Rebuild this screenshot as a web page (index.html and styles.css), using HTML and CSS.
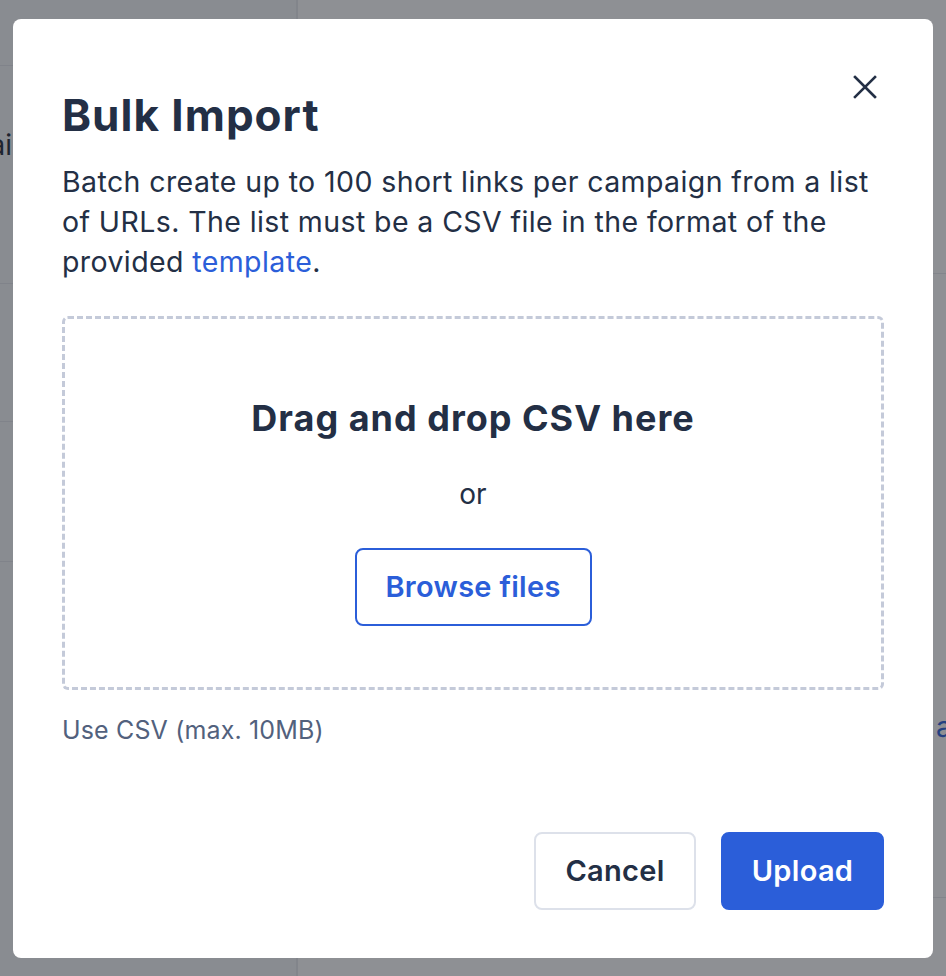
FILE: index.html
```html
<!DOCTYPE html>
<html lang="en">
<head>
<meta charset="utf-8">
<title>Bulk Import</title>
<link rel="stylesheet" href="styles.css">
</head>
<body>
<div class="page">
  <aside class="side">
    <div class="side-row r1"></div>
    <div class="side-row r2"><span class="ghost">Campai</span></div>
    <div class="side-row r3"></div>
    <div class="side-row r4"></div>
    <div class="side-row r5"></div>
  </aside>
  <main class="main">
    <div class="main-row m1"></div>
    <div class="main-row m2"><span class="ghost-link">a</span></div>
    <div class="main-row m3"></div>
  </main>
</div>

<div class="overlay">
  <div class="modal" role="dialog" aria-labelledby="title">
    <div class="modal-head">
      <h1 id="title" class="title">Bulk Import</h1>
      <button class="close" aria-label="Close">
        <svg width="24" height="24" viewBox="0 0 24 24" fill="none" stroke="currentColor" stroke-width="2.6" stroke-linecap="square">
          <path d="M2 2L22 22M22 2L2 22"/>
        </svg>
      </button>
    </div>
    <p class="desc">Batch create up to 100 short links per campaign from a list of URLs. The list must be a CSV file in the format of the provided <a href="#" class="link">template</a>.</p>
    <div class="drop">
      <div class="drop-title">Drag and drop CSV here</div>
      <div class="drop-or">or</div>
      <button class="btn btn-outline">Browse files</button>
    </div>
    <div class="hint">Use CSV (max. 10MB)</div>
    <div class="actions">
      <button class="btn btn-secondary">Cancel</button>
      <button class="btn btn-primary">Upload</button>
    </div>
  </div>
</div>
</body>
</html>
```

FILE: styles.css
```css
* { box-sizing: border-box; }
html, body { margin: 0; padding: 0; }
body {
  font-family: "Inter", "Lato", sans-serif;
  color: #232f45;
  background: #ffffff;
  width: 946px;
  height: 976px;
  overflow: hidden;
}

.page {
  display: flex;
  height: 976px;
}
.side {
  width: 298px;
  flex: none;
  background: #f5f6f8;
  border-right: 2px solid #e6e8ec;
  display: flex;
  flex-direction: column;
}
.side-row { border-bottom: 1px solid #e3e5ea; flex: none; }
.r1 { height: 66px; }
.r2 { height: 218px; padding-top: 62px; }
.r3 { height: 138px; }
.r4 { height: 140px; }
.r5 { flex: 1; border-bottom: 0; }
.ghost {
  display: block;
  text-align: right;
  font-size: 28px;
  color: #1f2635;
  padding-right: 284px;
  white-space: nowrap;
  margin-left: -100px;
}
.main { flex: 1; background: #ffffff; display: flex; flex-direction: column; }
.main-row { border-bottom: 1px solid #e6e8ec; flex: none; }
.m1 { height: 274px; }
.m2 { height: 624px; padding-top: 436px; padding-left: 638px; }
.m3 { flex: 1; border-bottom: 0; }
.ghost-link { font-size: 28px; color: #2b5ed9; }

.overlay {
  position: fixed;
  inset: 0;
  background: rgba(30, 34, 42, 0.5);
  display: flex;
  align-items: center;
  justify-content: center;
}

.modal {
  width: 920px;
  height: 939px;
  background: #ffffff;
  border-radius: 8px;
  padding: 54px 49px 48px 49px;
  display: flex;
  flex-direction: column;
}

.modal-head {
  display: flex;
  justify-content: space-between;
  align-items: flex-start;
}
.title {
  margin: 16px 0 0 0;
  font-size: 44px;
  line-height: 52px;
  font-weight: 700;
  letter-spacing: 1px;
  color: #232f45;
}
.close {
  border: 0;
  background: none;
  padding: 0;
  margin: 2px 7px 0 0;
  width: 24px;
  height: 24px;
  color: #232f45;
  cursor: pointer;
}
.close svg { display: block; }

.desc {
  margin: 21px 0 0 0;
  font-size: 28.5px;
  letter-spacing: 0.4px;
  line-height: 40px;
  color: #232f45;
}
.link { color: #2b5ed9; text-decoration: none; }

.drop {
  margin-top: 34px;
  height: 374px;
  border: 3px dashed #c4cad9;
  border-radius: 6px;
  display: flex;
  flex-direction: column;
  align-items: center;
  padding-top: 75px;
}
.drop-title {
  font-size: 36px;
  letter-spacing: 1px;
  line-height: 48px;
  font-weight: 700;
  color: #232f45;
}
.drop-or {
  margin-top: 32px;
  font-size: 28px;
  line-height: 40px;
  color: #232f45;
}
.btn {
  font-family: inherit;
  font-size: 29px;
  letter-spacing: 0.3px;
  font-weight: 600;
  height: 78px;
  border-radius: 8px;
  cursor: pointer;
}
.btn-outline {
  margin-top: 34px;
  width: 237px;
  background: #fff;
  border: 2px solid #2b5ed9;
  color: #2b5ed9;
}
.hint {
  margin-top: 22px;
  font-size: 25px;
  letter-spacing: 0.15px;
  line-height: 36px;
  color: #52617d;
}
.actions {
  margin-top: auto;
  display: flex;
  justify-content: flex-end;
  gap: 25px;
}
.btn-secondary {
  width: 162px;
  background: #fff;
  border: 2px solid #dde1ea;
  color: #232f45;
}
.btn-primary {
  width: 163px;
  background: #2b5ed9;
  border: 2px solid #2b5ed9;
  color: #fff;
}
```
